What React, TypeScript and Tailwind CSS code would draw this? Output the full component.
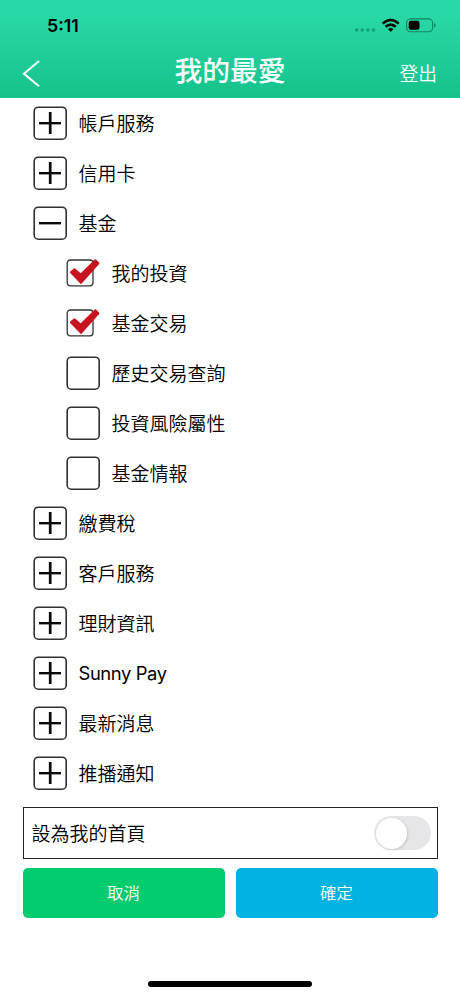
type Row = { label: string; kind: 'plus' | 'minus' | 'checked' | 'empty' };

const rows: Row[] = [
  { label: '帳戶服務', kind: 'plus' },
  { label: '信用卡', kind: 'plus' },
  { label: '基金', kind: 'minus' },
  { label: '我的投資', kind: 'checked' },
  { label: '基金交易', kind: 'checked' },
  { label: '歷史交易查詢', kind: 'empty' },
  { label: '投資風險屬性', kind: 'empty' },
  { label: '基金情報', kind: 'empty' },
  { label: '繳費稅', kind: 'plus' },
  { label: '客戶服務', kind: 'plus' },
  { label: '理財資訊', kind: 'plus' },
  { label: 'Sunny Pay', kind: 'plus' },
  { label: '最新消息', kind: 'plus' },
  { label: '推播通知', kind: 'plus' },
];

function BoxIcon({ kind }: { kind: Row['kind'] }) {
  return (
    <svg className="h-[34px] w-[34px] shrink-0" viewBox="0 0 34 34" fill="none">
      {kind === 'checked' ? (
        <>
          <rect x="1.2" y="4" width="25.8" height="25.8" rx="3" stroke="#333" strokeWidth="1.3" />
          <path d="M4.9 16.3L8.5 13.2L14.6 18.6L29.4 4.2L32.4 7.4L15 26.9Z" fill="#c81420" stroke="#c81420" strokeWidth="2" strokeLinejoin="round" />
        </>
      ) : (
        <rect x="1.2" y="1.2" width="32" height="32" rx="4" stroke="#303030" strokeWidth="1.6" />
      )}
      {(kind === 'plus' || kind === 'minus') && <path d="M6 17.2H28" stroke="#080808" strokeWidth="2.4" />}
      {kind === 'plus' && <path d="M17.2 6V28" stroke="#080808" strokeWidth="2.7" />}
    </svg>
  );
}

function StatusIcons() {
  return (
    <svg className="h-[20px] w-[84px]" viewBox="354 16 84 20" fill="none">
      <g fill="#0f8c67" fillOpacity="0.75">
        <circle cx="356.7" cy="30" r="1.8" />
        <circle cx="362.3" cy="30" r="1.8" />
        <circle cx="367.9" cy="30" r="1.8" />
        <circle cx="373.5" cy="30" r="1.8" />
      </g>
      <g stroke="#000" strokeWidth="2.6">
        <path d="M382.7 23.6Q390.7 16.4 398.7 23.6" />
        <path d="M385.6 26.8Q390.7 22.5 395.8 26.8" />
      </g>
      <path d="M387.9 29Q390.7 26.9 393.5 29L390.7 31.9Z" fill="#000" />
      <rect x="406.6" y="18.9" width="26" height="12.8" rx="4" stroke="#108460" strokeWidth="1.1" />
      <rect x="408.7" y="20.8" width="10.8" height="9" rx="2.2" fill="#000" />
      <path d="M434.1 22.8Q437.4 25.2 434.1 27.7Z" fill="#108460" />
    </svg>
  );
}

export default function App() {
  return (
    <div className="flex h-[996px] w-[460px] flex-col overflow-hidden bg-white font-['Inter','Noto_Sans_CJK_TC',sans-serif] text-black">
      <header className="h-[98px] shrink-0 bg-linear-to-b from-[#28d8a6] from-15% to-[#16c28b]">
        <div className="flex h-[49px] items-start justify-between pt-4 pr-[22px] pl-[47px]">
          <span className="text-[17.8px] leading-5 font-semibold">5:11</span>
          <StatusIcons />
        </div>
        <div className="grid h-[49px] grid-cols-[100px_1fr_100px] text-white">
          <button className="pl-[22px]" aria-label="返回">
            <svg className="h-[49px] w-5" viewBox="0 0 20 49" fill="none" stroke="white" strokeWidth="2.1">
              <path d="M17 12L2 24.7L17 37.2" />
            </svg>
          </button>
          <h1 className="pt-[1px] text-center text-[27.8px] leading-[42px] font-medium">我的最愛</h1>
          <button className="pt-[2px] pr-[23px] text-right text-[18.8px] leading-[47px] font-[350]">登出</button>
        </div>
      </header>
      <main className="px-[22.5px]">
        <ul>
          {rows.map(({ label, kind }) => (
            <li
              key={label}
              className={`flex h-[50px] items-center gap-[11.5px] text-[19px] font-[350] ${
                kind === 'checked' || kind === 'empty' ? 'pl-[43.5px]' : 'pl-[10.5px]'
              }`}
            >
              <BoxIcon kind={kind} />
              <span className={label === 'Sunny Pay' ? 'pt-[2px] text-[18.4px] font-normal tracking-[-0.4px]' : 'pt-[5px]'}>{label}</span>
            </li>
          ))}
        </ul>
        <div className="mt-[9px] flex h-[52px] items-center justify-between border border-[#222] pr-[6px] pl-2 text-[19px] font-[350]">
          <span className="pt-[5px]">設為我的首頁</span>
          <span className="flex h-[34px] w-[57px] items-center rounded-full bg-[#e6e6e8] pl-[2px]">
            <span className="h-[31px] w-[31px] rounded-full bg-white shadow-[1px_1px_3px_rgba(0,0,0,0.14)]" />
          </span>
        </div>
        <div className="mt-[9px] grid h-[49.5px] grid-cols-2 gap-[11px] text-[16.4px] font-[350] text-white">
          <button className="rounded-[5px] bg-[#03cc6e] pt-[2px]">取消</button>
          <button className="rounded-[5px] bg-[#02b3e2] pt-[2px]">確定</button>
        </div>
      </main>
      <div className="mt-auto mb-[9px] h-[6px] w-[164px] self-center rounded-full bg-black" />
    </div>
  );
}
